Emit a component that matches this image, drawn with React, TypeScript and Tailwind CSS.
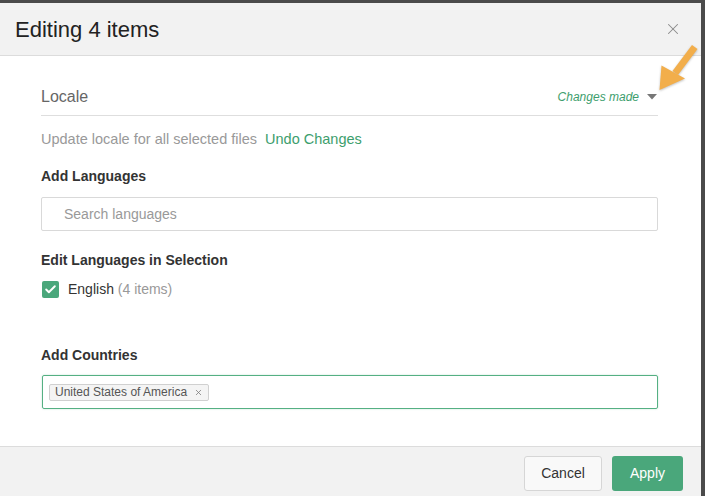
import { Check, X } from "lucide-react";

const font = { fontFamily: '"Liberation Sans", Arial, sans-serif' };

function Arrow() {
  // orange annotation arrow pointing at the dropdown caret
  return (
    <svg
      className="absolute left-[640px] top-[40px]"
      width="65"
      height="60"
      viewBox="0 0 65 60"
    >
      <g fill="#f2ae4b" style={{ filter: "drop-shadow(0 1px 1px rgba(0,0,0,0.25))" }}>
        <path d="M52 5 L57.5 9 L38 35 L32.5 31 Z" />
        <path d="M19.5 50 L21.5 25.5 L45 38.5 Z" />
      </g>
    </svg>
  );
}

export default function App() {
  return (
    <div
      className="relative w-[705px] h-[496px] bg-[#4b4b4b] pt-[3px] pr-[4px] overflow-hidden"
      style={font}
    >
      <div className="w-[701px] h-[493px] bg-white flex flex-col">
        {/* header */}
        <div className="h-[53px] shrink-0 bg-[#f2f2f2] border-b border-[#dcdcdc] flex items-center justify-between pl-[15px] pr-[19px]">
          <h1 className="text-[22px] text-[#222]">Editing 4 items</h1>
          <X className="w-[18px] h-[18px] text-[#8a8a8a]" strokeWidth={1.4} />
        </div>

        {/* body */}
        <div className="flex-1 pl-[41px] pr-[43px] pt-[23px]">
          <div className="h-[37px] border-b border-[#dedede] flex items-center justify-between">
            <span className="text-[16px] text-[#666]">Locale</span>
            <div className="flex items-center gap-[8px] pr-[1px]">
              <span className="text-[12px] italic text-[#3d9e6d]">Changes made</span>
              <svg width="10" height="6" viewBox="0 0 10 6">
                <path d="M0 0 L10 0 L5 5.5 Z" fill="#777" />
              </svg>
            </div>
          </div>

          <p className="mt-[13px] text-[14.5px] leading-[20px] text-[#999]">
            Update locale for all selected files{" "}
            <span className="ml-[4px] text-[#3d9e6d]">Undo Changes</span>
          </p>

          <h2 className="mt-[17px] text-[14px] leading-[20px] font-bold text-[#333]">
            Add Languages
          </h2>
          <div className="mt-[11px] h-[34px] border border-[#d9d9d9] rounded-[2px] flex items-center pl-[22px] text-[14px] text-[#999]">
            Search languages
          </div>

          <h2 className="mt-[19px] text-[14px] leading-[20px] font-bold text-[#333]">
            Edit Languages in Selection
          </h2>
          <div className="mt-[9px] h-[20px] flex items-center gap-[9px] pl-[1px]">
            <span className="w-[17px] h-[17px] rounded-[2px] bg-[#4aa77b] flex items-center justify-center">
              <Check className="w-[13px] h-[13px] text-white" strokeWidth={3.5} />
            </span>
            <span className="text-[14px] text-[#333]">
              English <span className="text-[#999]">(4 items)</span>
            </span>
          </div>

          <h2 className="mt-[46px] text-[14px] leading-[20px] font-bold text-[#333]">
            Add Countries
          </h2>
          <div className="mt-[10px] ml-[1px] h-[34px] border border-[#55b083] rounded-[2px] flex items-center pl-[6px] shadow-[0_0_2px_rgba(74,167,123,0.35)]">
            <span className="h-[17px] flex items-center gap-[7px] px-[5px] bg-[#f4f4f4] border border-[#d0d0d0] rounded-[2px] text-[12px] text-[#555]">
              United States of America
              <X className="w-[9px] h-[9px] text-[#777]" strokeWidth={2} />
            </span>
          </div>
        </div>

        {/* footer */}
        <div className="h-[50px] shrink-0 bg-[#f2f2f2] border-t border-[#dcdcdc] flex items-center justify-end gap-[10px] pr-[18px] pt-[3px]">
          <button className="w-[78px] h-[35px] bg-[#f9f9f9] border border-[#d6d6d6] rounded-[3px] text-[14px] text-[#333]">
            Cancel
          </button>
          <button className="w-[71px] h-[35px] bg-[#4aa77b] rounded-[3px] text-[14px] text-white">
            Apply
          </button>
        </div>
      </div>
      <Arrow />
    </div>
  );
}
